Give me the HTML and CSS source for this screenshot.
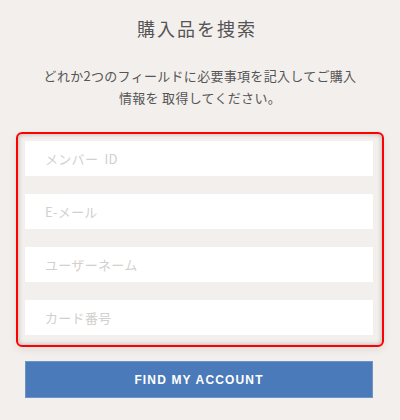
FILE: index.html
```html
<!DOCTYPE html>
<html lang="ja">
<head>
<meta charset="utf-8">
<link rel="stylesheet" href="styles.css">
</head>
<body>
<div class="page">
  <h1 class="title">購入品を捜索</h1>
  <p class="desc">どれか2つのフィールドに必要事項を記入してご購入<br>情報を 取得してください。</p>
  <div class="fields">
    <input class="field" type="text" placeholder="メンバー ID">
    <input class="field" type="text" placeholder="E-メール">
    <input class="field" type="text" placeholder="ユーザーネーム">
    <input class="field" type="text" placeholder="カード番号">
  </div>
  <button class="submit" type="button">FIND MY ACCOUNT</button>
</div>
</body>
</html>
```
FILE: styles.css
```css
html, body {
  margin: 0;
  padding: 0;
  background: #f3efec;
}
body {
  font-family: "Noto Sans CJK JP", "Noto Sans", sans-serif;
  color: #555;
}
.page {
  width: 368px;
  padding: 16px 16px 0;
}
.title {
  margin: 0;
  padding-right: 6px;
  font-size: 18px;
  line-height: 24px;
  font-weight: normal;
  letter-spacing: 2px;
  text-align: center;
  color: #555;
}
.desc {
  margin: 25px 0 0;
  font-size: 13px;
  line-height: 22px;
  letter-spacing: 0.3px;
  text-align: center;
  color: #555;
}
.fields {
  margin-top: 23px;
  display: flex;
  flex-direction: column;
  gap: 18px;
  padding: 7px 9px 10px 7px;
  border: 2px solid #ff0000;
  border-radius: 6px;
  box-shadow: inset 0 0 5px rgba(0,0,0,0.28), 0 3px 8px rgba(0,0,0,0.08);
}
.field {
  height: 35px;
  box-sizing: border-box;
  border: none;
  outline: none;
  background: #fff;
  padding: 0 20px;
  font-family: "Noto Sans CJK JP", "Noto Sans", sans-serif;
  font-size: 13px;
  letter-spacing: 0.3px;
  word-spacing: 3px;
  color: #555;
  margin: 0;
}
.field::placeholder {
  color: #d2cfcd;
}
.submit {
  display: block;
  margin: 14px 0 0 9px;
  width: 348px;
  height: 37px;
  border: 1px solid #6e93c8;
  background: #4a7aba;
  color: #fff;
  font-family: "Liberation Sans", Arial, sans-serif;
  font-weight: bold;
  font-size: 12px;
  letter-spacing: 1.15px;
  padding: 0;
}
```
